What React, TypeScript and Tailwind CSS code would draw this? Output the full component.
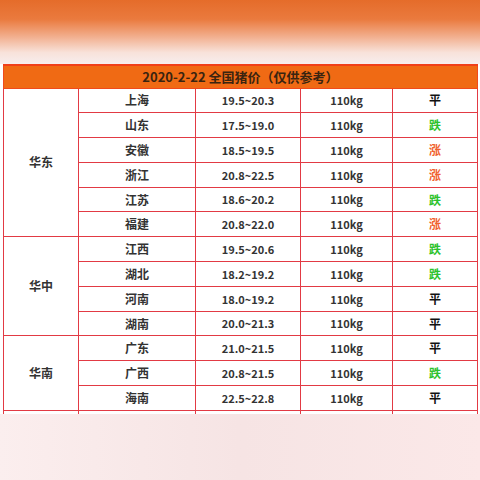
import React from 'react'

type Row = { city: string; price: string; trend: '平' | '跌' | '涨' }
type Region = { name: string; rows: Row[] }

const regions: Region[] = [
  {
    name: '华东',
    rows: [
      { city: '上海', price: '19.5~20.3', trend: '平' },
      { city: '山东', price: '17.5~19.0', trend: '跌' },
      { city: '安徽', price: '18.5~19.5', trend: '涨' },
      { city: '浙江', price: '20.8~22.5', trend: '涨' },
      { city: '江苏', price: '18.6~20.2', trend: '跌' },
      { city: '福建', price: '20.8~22.0', trend: '涨' },
    ],
  },
  {
    name: '华中',
    rows: [
      { city: '江西', price: '19.5~20.6', trend: '跌' },
      { city: '湖北', price: '18.2~19.2', trend: '跌' },
      { city: '河南', price: '18.0~19.2', trend: '平' },
      { city: '湖南', price: '20.0~21.3', trend: '平' },
    ],
  },
  {
    name: '华南',
    rows: [
      { city: '广东', price: '21.0~21.5', trend: '平' },
      { city: '广西', price: '20.8~21.5', trend: '跌' },
      { city: '海南', price: '22.5~22.8', trend: '平' },
    ],
  },
]

const trendColor = {
  平: 'text-[#111111]',
  跌: 'text-[#2cc22c]',
  涨: 'text-[#f0602c]',
}

const cell = 'border border-[#e23a44] text-center align-middle p-0'

export default function App() {
  return (
    <div
      className="w-[480px] h-[480px] overflow-hidden bg-[#fbeaea] flex flex-col"
      style={{ fontFamily: '"Noto Sans CJK SC", "Noto Sans", sans-serif' }}
    >
      {/* blurred banner */}
      <div className="h-[64px] shrink-0 bg-[linear-gradient(to_bottom,#e56c2a_0%,#ea7a3e_30%,#f2b090_58%,#f8e2da_82%,#f7eeee_100%)]" />

      <div className="h-[350px] shrink-0 px-[3px] overflow-hidden bg-white">
        <table className="w-[474px] border-collapse table-fixed text-[#333333] font-bold">
          <colgroup>
            <col className="w-[75px]" />
            <col className="w-[117px]" />
            <col className="w-[105px]" />
            <col className="w-[92px]" />
            <col className="w-[85px]" />
          </colgroup>
          <thead>
            <tr className="h-[23px]">
              <th
                colSpan={5}
                className="bg-[#f06a14] border border-[#f04a1c] border-t-2 border-t-[#f0401a] text-[13px] text-[#3a2410] font-bold p-0"
              >
                2020-2-22 全国猪价（仅供参考）
              </th>
            </tr>
          </thead>
          <tbody>
            {regions.map((r) =>
              r.rows.map((row, i) => (
                <tr key={row.city} className="h-[24.8px]">
                  {i === 0 && (
                    <td rowSpan={r.rows.length} className={`${cell} text-[12px]`}>
                      {r.name}
                    </td>
                  )}
                  <td className={`${cell} text-[12px]`}>{row.city}</td>
                  <td className={`${cell} text-[11px]`}>{row.price}</td>
                  <td className={`${cell} text-[11px]`}>110kg</td>
                  <td className={`${cell} text-[12px] ${trendColor[row.trend]}`}>{row.trend}</td>
                </tr>
              ))
            )}
            <tr className="h-[25px]">
              <td className={cell} />
              <td className={cell} />
              <td className={cell} />
              <td className={cell} />
              <td className={cell} />
            </tr>
          </tbody>
        </table>
      </div>

      {/* blurred footer */}
      <div className="flex-1 bg-gradient-to-r from-[#fbeeee] via-[#f6e4e4] to-[#fbe8e8]" />
    </div>
  )
}
